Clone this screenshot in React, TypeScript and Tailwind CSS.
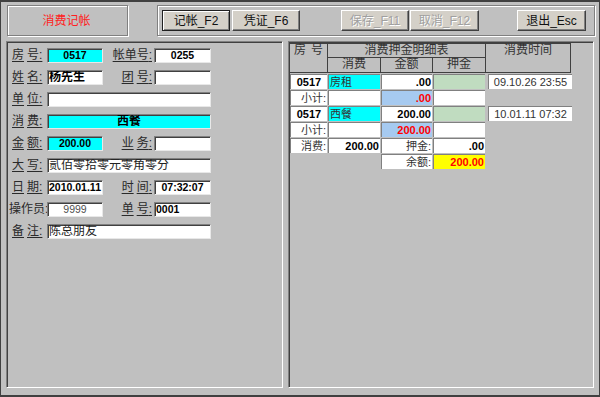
const font = "font-['Liberation_Sans','Noto_Sans_CJK_SC',sans-serif]";
const sunken =
  "border border-t-[#808080] border-l-[#808080] border-r-[#e8e8e8] border-b-[#e8e8e8] shadow-[inset_1px_1px_0_#404040]";
const panel =
  "border border-t-[#808080] border-l-[#808080] border-r-white border-b-white shadow-[inset_1px_1px_0_#404040]";
const etched = "border border-[#808080] shadow-[inset_1px_1px_0_#fff,1px_1px_0_#fff]";

type Tone = "white" | "cyan";

const Sp = ({ w = "w-[3px]" }: { w?: string }) => <span className={`inline-block ${w}`} />;

const Label = ({ a, b, plain, w, right }: { a: string; b?: string; plain?: boolean; w: string; right?: boolean }) => (
  <div
    className={`${w} shrink-0 whitespace-nowrap text-[12px] leading-[15px] text-[#2a2a2a] ${
      right ? "text-right pr-[2px]" : plain ? "" : "pl-[3px]"
    }`}
  >
    <span className={plain ? "" : "underline underline-offset-2 decoration-[#2a2a2a]"}>
      {b ? (
        <>
          {a}
          <Sp />
          {b}
        </>
      ) : (
        a
      )}
      :
    </span>
  </div>
);

const Box = ({
  w,
  tone = "white",
  text = "",
  bold,
  align = "left",
  gray,
  cjk,
}: {
  w: string;
  tone?: Tone;
  text?: string;
  bold?: boolean;
  align?: "left" | "center";
  gray?: boolean;
  cjk?: boolean;
}) => (
  <div
    className={`${w} h-[15px] shrink-0 ${sunken} ${tone === "cyan" ? "bg-[#00ffff]" : "bg-white"} ${
      align === "center" ? "text-center" : "pl-[1px]"
    } ${bold ? "font-bold text-black" : gray ? "text-[#505050]" : "text-[#222]"} ${
      cjk ? "text-[12px]" : "text-[10.5px]"
    } leading-[13px] overflow-hidden whitespace-nowrap`}
  >
    {text}
  </div>
);

const Btn = ({ label, disabled, main, w = "w-[68px]" }: { label: string; disabled?: boolean; main?: boolean; w?: string }) => (
  <div
    className={`${w} h-[21px] flex items-center justify-center bg-[#d4d0c8] text-[12px] ${
      main
        ? "border border-[#202020] shadow-[inset_1px_1px_0_#fff,inset_-1px_-1px_0_#808080]"
        : "border border-t-white border-l-white border-r-[#404040] border-b-[#404040] shadow-[inset_-1px_-1px_0_#808080]"
    } ${disabled ? "text-[#a0a0a0] text-shadow-[1px_1px_0_#fff]" : "text-[#111]"}`}
  >
    {label}
  </div>
);

type Cell = { t?: string; bg?: string; b?: boolean; red?: boolean; al?: "l" | "r" | "c"; none?: boolean };

const widths = ["w-[37px]", "w-[52px]", "w-[51px]", "w-[52px]", "w-[84px]"];

const rows: Cell[][] = [
  [
    { t: "0517", b: true, al: "c" },
    { t: "房租", bg: "bg-[#00ffff]" },
    { t: ".00", b: true, al: "r" },
    { bg: "bg-[#c0dcc0]" },
    { t: "09.10.26 23:55", al: "c" },
  ],
  [
    { t: "小计:", al: "r" },
    {},
    { t: ".00", bg: "bg-[#a6caf0]", b: true, red: true, al: "r" },
    {},
    { none: true },
  ],
  [
    { t: "0517", b: true, al: "c" },
    { t: "西餐", bg: "bg-[#00ffff]" },
    { t: "200.00", b: true, al: "r" },
    { bg: "bg-[#c0dcc0]" },
    { t: "10.01.11 07:32", al: "c" },
  ],
  [
    { t: "小计:", al: "r" },
    {},
    { t: "200.00", bg: "bg-[#a6caf0]", b: true, red: true, al: "r" },
    {},
    { none: true },
  ],
  [
    { t: "消费:", al: "r" },
    { t: "200.00", b: true, al: "r" },
    { t: "押金:", al: "r" },
    { t: ".00", b: true, al: "r" },
    { none: true },
  ],
  [
    { none: true },
    { none: true },
    { t: "余额:", al: "r" },
    { t: "200.00", bg: "bg-[#ffff00]", b: true, red: true, al: "r" },
    { none: true },
  ],
];

export default function App() {
  return (
    <div
      className={`${font} w-[600px] h-[397px] overflow-hidden bg-[#c0c0c0] border-t-2 border-l border-b-2 border-r border-[#404040] flex flex-col pt-[3px]`}
    >
      {/* top bar */}
      <div className="flex h-[31px] shrink-0">
        <div className={`ml-[6px] w-[121px] ${etched} flex items-center justify-center text-[12px] text-[#ff2020] pr-[2px]`}>
          消费记帐
        </div>
        <div className={`ml-[29px] w-[438px] ${etched} flex items-center pl-[4px]`}>
          <Btn label="记帐_F2" main />
          <div className="ml-[2px]">
            <Btn label="凭证_F6" />
          </div>
          <div className="ml-[41px]">
            <Btn label="保存_F11" disabled />
          </div>
          <div className="ml-[1px]">
            <Btn label="取消_F12" disabled w="w-[69px]" />
          </div>
          <div className="ml-[38px]">
            <Btn label="退出_Esc" w="w-[69px]" />
          </div>
        </div>
      </div>

      {/* panels */}
      <div className="flex mt-[5px] h-[347px] shrink-0">
        <div className={`ml-[5px] w-[277px] ${panel} pt-[6px] pl-[2px] flex flex-col gap-[7px]`}>
          <div className="flex items-center">
            <Label a="房" b="号" w="w-[38px]" />
            <Box w="w-[56px]" tone="cyan" text="0517" bold align="center" />
            <Label a="帐单号" w="w-[51px]" right />
            <Box w="w-[57px]" text="0255" bold align="center" />
          </div>
          <div className="flex items-center">
            <Label a="姓" b="名" w="w-[38px]" />
            <Box w="w-[56px]" text="杨先生" bold cjk />
            <Label a="团" b="号" w="w-[51px]" right />
            <Box w="w-[57px]" />
          </div>
          <div className="flex items-center">
            <Label a="单" b="位" w="w-[38px]" />
            <Box w="w-[164px]" />
          </div>
          <div className="flex items-center">
            <Label a="消" b="费" w="w-[38px]" />
            <Box w="w-[164px]" tone="cyan" text="西餐" bold align="center" cjk />
          </div>
          <div className="flex items-center">
            <Label a="金" b="额" w="w-[38px]" />
            <Box w="w-[56px]" tone="cyan" text="200.00" bold align="center" />
            <Label a="业" b="务" w="w-[51px]" right />
            <Box w="w-[57px]" />
          </div>
          <div className="flex items-center">
            <Label a="大" b="写" w="w-[38px]" />
            <Box w="w-[164px]" text="贰佰零拾零元零角零分" cjk />
          </div>
          <div className="flex items-center">
            <Label a="日" b="期" w="w-[38px]" />
            <Box w="w-[56px]" text="2010.01.11" bold />
            <Label a="时" b="间" w="w-[51px]" right />
            <Box w="w-[57px]" text="07:32:07" bold align="center" />
          </div>
          <div className="flex items-center">
            <Label a="操作员" w="w-[38px]" plain />
            <Box w="w-[56px]" text="9999" align="center" gray />
            <Label a="单" b="号" w="w-[51px]" right />
            <Box w="w-[57px]" text="0001" bold />
          </div>
          <div className="flex items-center">
            <Label a="备" b="注" w="w-[38px]" />
            <Box w="w-[164px]" text="陈总朋友" cjk />
          </div>
        </div>

        <div className={`ml-[5px] w-[306px] ${panel} pt-px`}>
          {/* header */}
          <div className="w-[282px] grid grid-cols-[37px_52px_51px_52px_84px] grid-rows-[13px_14px] gap-px p-px bg-[#404040] text-[12px] text-[#333] leading-[13px]">
            <div className="row-span-2 bg-[#c0c0c0] text-center">
              房<Sp w="w-[5px]" />号
            </div>
            <div className="col-span-3 bg-[#c0c0c0] text-center">消费押金明细表</div>
            <div className="row-span-2 bg-[#c0c0c0] text-center">消费时间</div>
            <div className="bg-[#c0c0c0] text-center">消费</div>
            <div className="bg-[#c0c0c0] text-center">金额</div>
            <div className="bg-[#c0c0c0] text-center">押金</div>
          </div>
          {/* body */}
          <div className="mt-px flex flex-col gap-px">
            {rows.map((r, i) => (
              <div key={i} className="flex h-[15px] pl-px gap-px">
                {r.map((c, j) => (
                  <div
                    key={j}
                    className={`${widths[j]} ${j === 4 ? "ml-[2px]" : ""} shrink-0 h-[15px] ${
                      c.none
                        ? ""
                        : `${c.bg ?? "bg-white"} border-t border-l border-[#808080] ${
                            c.al === "r" ? "text-right pr-[1px]" : c.al === "c" ? "text-center" : "pl-[1px]"
                          } ${c.b ? "font-bold" : ""} ${c.red ? "text-[#ff0000]" : c.b ? "text-black" : "text-[#333]"}`
                    } text-[11px] leading-[14px] whitespace-nowrap overflow-hidden`}
                  >
                    {c.t}
                  </div>
                ))}
              </div>
            ))}
          </div>
        </div>
      </div>
    </div>
  );
}
